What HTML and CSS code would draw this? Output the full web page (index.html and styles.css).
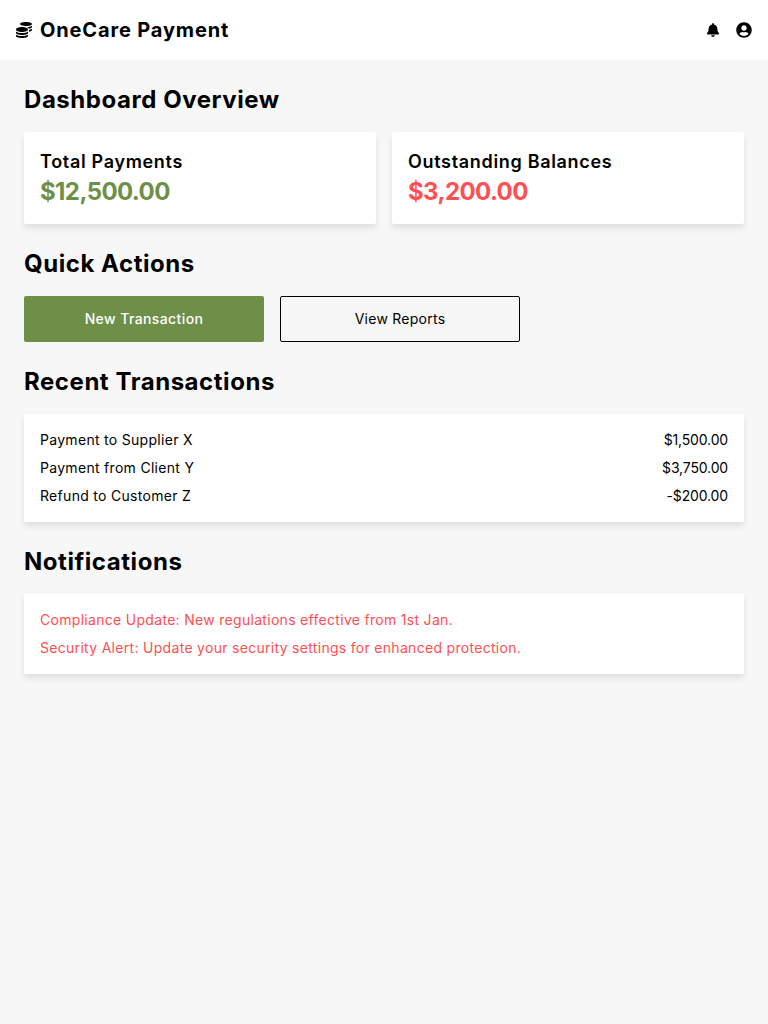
FILE: index.html
```html
<!DOCTYPE html>
<html lang="en">
<head>
    <meta charset="UTF-8">
    <meta name="viewport" content="width=device-width, initial-scale=1.0">
    <title>OneCare Payment</title>
    <link rel="stylesheet" href="styles.css">
</head>
<body>

<header class="topbar">
    <div class="brand">
        <svg class="icon-coins" viewBox="0 0 512 512" aria-hidden="true"><path d="M0 405.3V448c0 35.3 86 64 192 64s192-28.7 192-64v-42.7C342.7 434.4 267.2 448 192 448S41.3 434.4 0 405.3zM320 128c106 0 192-28.7 192-64S426 0 320 0 128 28.7 128 64s86 64 192 64zM0 300.4V352c0 35.3 86 64 192 64s192-28.7 192-64v-51.6c-41.3 34-116.9 51.6-192 51.6S41.3 334.4 0 300.4zm416 11c57.3-11.1 96-31.7 96-55.4v-42.7c-23.2 16.4-57.3 27.6-96 34.5v63.6zM192 160C86 160 0 195.8 0 240s86 80 192 80 192-35.8 192-80-86-80-192-80zm219.3 56.3c60-10.8 100.7-32 100.7-56.3v-42.7c-35.5 25.1-96.5 38.6-160.7 41.8 29.5 14.3 51.2 33.5 60 57.2z"/></svg>
        <h1>OneCare Payment</h1>
    </div>
    <div class="topbar-icons">
        <svg class="icon-bell" viewBox="0 0 448 512" aria-hidden="true"><path d="M224 512c35.32 0 63.97-28.65 63.97-64H160.03c0 35.35 28.65 64 63.97 64zm215.39-149.71c-19.32-20.76-55.47-51.99-55.47-154.29 0-77.7-54.48-139.9-127.94-155.16V32c0-17.67-14.32-32-31.98-32s-31.98 14.33-31.98 32v20.84C118.56 68.1 64.08 130.3 64.08 208c0 102.3-36.15 133.53-55.47 154.29-6 6.45-8.66 14.16-8.61 21.71.11 16.4 12.98 32 32.1 32h383.8c19.12 0 32-15.6 32.1-32 .05-7.55-2.61-15.27-8.61-21.71z"/></svg>
        <svg class="icon-user" viewBox="0 0 496 512" aria-hidden="true"><path d="M248 8C111 8 0 119 0 256s111 248 248 248 248-111 248-248S385 8 248 8zm0 96c48.6 0 88 39.4 88 88s-39.4 88-88 88-88-39.4-88-88 39.4-88 88-88zm0 344c-58.7 0-111.3-26.6-146.5-68.2 18.8-35.4 55.6-59.8 98.5-59.8 2.4 0 4.8.4 7.1 1.1 13 4.2 26.6 6.9 40.9 6.9 14.3 0 28-2.7 40.9-6.9 2.3-.7 4.7-1.1 7.1-1.1 42.9 0 79.7 24.4 98.5 59.8C359.3 421.4 306.7 448 248 448z"/></svg>
    </div>
</header>

<main class="content">
    <section class="section">
        <h2>Dashboard Overview</h2>
        <div class="cards">
            <div class="card">
                <h3>Total Payments</h3>
                <p class="amount amount-green">$12,500.00</p>
            </div>
            <div class="card">
                <h3>Outstanding Balances</h3>
                <p class="amount amount-red">$3,200.00</p>
            </div>
        </div>
    </section>

    <section class="section">
        <h2>Quick Actions</h2>
        <div class="actions">
            <button class="btn btn-primary" type="button">New Transaction</button>
            <button class="btn btn-outline" type="button">View Reports</button>
        </div>
    </section>

    <section class="section">
        <h2>Recent Transactions</h2>
        <ul class="panel">
            <li class="row"><span>Payment to Supplier X</span><span class="money">$1,500.00</span></li>
            <li class="row"><span>Payment from Client Y</span><span class="money">$3,750.00</span></li>
            <li class="row"><span>Refund to Customer Z</span><span class="money">-$200.00</span></li>
        </ul>
    </section>

    <section class="section">
        <h2>Notifications</h2>
        <ul class="panel panel-alerts">
            <li class="row">Compliance Update: New regulations effective from 1st Jan.</li>
            <li class="row">Security Alert: Update your security settings for enhanced protection.</li>
        </ul>
    </section>
</main>

</body>
</html>
```

FILE: styles.css
```css
* {
    box-sizing: border-box;
}

body {
    margin: 0;
    background-color: #F7F7F7;
    color: #000000;
    font-family: "Inter", "Liberation Sans", sans-serif;
}

h1, h2, h3, p, ul {
    margin: 0;
    padding: 0;
}

ul {
    list-style-type: none;
}

.topbar {
    display: flex;
    align-items: center;
    justify-content: space-between;
    height: 60px;
    padding: 0 16px;
    background-color: #FFFFFF;
}

.brand {
    display: flex;
    align-items: center;
    gap: 8px;
}

.brand h1 {
    font-size: 20px;
    font-weight: 750;
    line-height: 30px;
    letter-spacing: 0.85px;
}

.icon-coins {
    display: block;
    width: 16px;
    height: 16px;
}

.topbar-icons {
    display: flex;
    align-items: center;
    gap: 16px;
}

.icon-bell {
    display: block;
    width: 14px;
    height: 14px;
}

.icon-user {
    display: block;
    width: 16px;
    height: 16px;
}

.content {
    padding: 24px;
}

.section {
    margin-bottom: 24px;
}

.section h2 {
    margin-bottom: 16px;
    font-size: 24px;
    font-weight: 750;
    line-height: 32px;
    letter-spacing: 0.55px;
}

.cards {
    display: grid;
    grid-template-columns: 1fr 1fr;
    gap: 16px;
}

.card {
    padding: 16px;
    background-color: #FFFFFF;
    border-radius: 2px;
    box-shadow: 0 4px 6px rgba(0, 0, 0, 0.1);
}

.card h3 {
    font-size: 18px;
    font-weight: 600;
    line-height: 27px;
    letter-spacing: 0.68px;
}

.amount {
    font-size: 24px;
    font-weight: 750;
    line-height: 33px;
    letter-spacing: -0.6px;
}

.amount-green {
    color: #6E8F47;
}

.amount-red {
    color: #FF4F52;
}

.actions {
    display: flex;
    gap: 16px;
}

.btn {
    width: 240px;
    height: 46px;
    padding-bottom: 2px;
    border-radius: 2px;
    font-family: inherit;
    font-size: 14px;
}

.btn-primary {
    border: none;
    background-color: #6E8F47;
    color: #FFFFFF;
    font-weight: 500;
    letter-spacing: 0.4px;
}

.btn-outline {
    border: 1px solid #000000;
    background-color: transparent;
    color: #000000;
    letter-spacing: 0.25px;
}

.panel {
    padding: 12px 16px;
    background-color: #FFFFFF;
    border-radius: 2px;
    box-shadow: 0 4px 6px rgba(0, 0, 0, 0.1);
}

.row {
    display: flex;
    justify-content: space-between;
    font-size: 14px;
    line-height: 28px;
    letter-spacing: 0.3px;
}

.money {
    letter-spacing: -0.15px;
}

.panel-alerts {
    color: #FF4F52;
}
```
